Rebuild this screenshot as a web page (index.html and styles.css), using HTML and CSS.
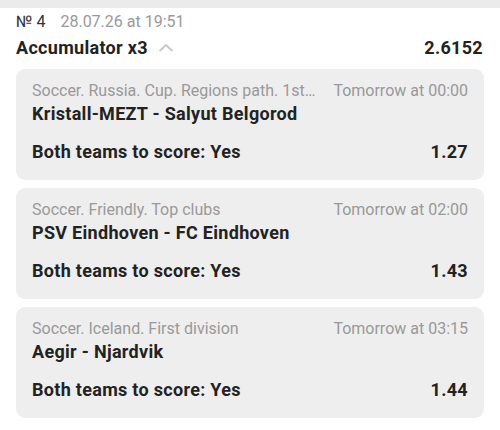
FILE: index.html
```html
<!DOCTYPE html>
<html>
<head>
<meta charset="utf-8">
<link rel="stylesheet" href="styles.css">
</head>
<body>
<div class="topband"></div>
<div class="page">
  <div class="meta"><span class="num">№ 4</span><span class="date">28.07.26 at 19:51</span></div>
  <div class="head">
    <div class="title">Accumulator x3
      <svg class="chev" width="16" height="9" viewBox="0 0 16 9"><path d="M1.5 8 L8 2 L14.5 8" fill="none" stroke="#c8c8c8" stroke-width="2"/></svg>
    </div>
    <div class="total">2.6152</div>
  </div>
  <div class="cards">
    <div class="card">
      <div class="row"><span class="cat">Soccer. Russia. Cup. Regions path. 1st…</span><span class="time">Tomorrow at 00:00</span></div>
      <div class="teams">Kristall-MEZT - Salyut Belgorod</div>
      <div class="bet"><span>Both teams to score: Yes</span><span>1.27</span></div>
    </div>
    <div class="card">
      <div class="row"><span class="cat">Soccer. Friendly. Top clubs</span><span class="time">Tomorrow at 02:00</span></div>
      <div class="teams">PSV Eindhoven - FC Eindhoven</div>
      <div class="bet"><span>Both teams to score: Yes</span><span>1.43</span></div>
    </div>
    <div class="card">
      <div class="row"><span class="cat">Soccer. Iceland. First division</span><span class="time">Tomorrow at 03:15</span></div>
      <div class="teams">Aegir - Njardvik</div>
      <div class="bet"><span>Both teams to score: Yes</span><span>1.44</span></div>
    </div>
  </div>
</div>
</body>
</html>
```
FILE: styles.css
```css
* { box-sizing: border-box; }
body {
  margin: 0;
  background: #fff;
  font-family: Roboto, "Noto Sans", sans-serif;
  color: #222;
}
.topband { height: 8px; background: #ebebeb; }
.page { padding: 4px 16px 0 16px; }
.meta {
  display: flex;
  gap: 15px;
  font-size: 16px;
  line-height: 19px;
}
.meta .num { color: #333; }
.meta .date { color: #999; }
.head {
  display: flex;
  justify-content: space-between;
  align-items: center;
  margin-top: 6px;
  padding-right: 1px;
  font-size: 18px;
  font-weight: 700;
  line-height: 22px;
  letter-spacing: 0.3px;
}
.title { display: flex; align-items: center; gap: 10px; }
.chev { margin-top: -1px; }
.cards {
  margin-top: 10px;
  display: flex;
  flex-direction: column;
  gap: 8px;
}
.card {
  background: #eeeeee;
  border-radius: 9px;
  padding: 12px 16px 16px 16px;
}
.row {
  display: flex;
  justify-content: space-between;
  gap: 14px;
  font-size: 16px;
  line-height: 19px;
  color: #999;
}
.cat { white-space: nowrap; overflow: hidden; text-overflow: ellipsis; }
.time { white-space: nowrap; }
.teams {
  margin-top: 2px;
  font-size: 18px;
  font-weight: 700;
  line-height: 24px;
  letter-spacing: 0.3px;
}
.bet {
  margin-top: 14px;
  display: flex;
  justify-content: space-between;
  font-size: 18px;
  font-weight: 700;
  line-height: 24px;
  letter-spacing: 0.3px;
}
```
